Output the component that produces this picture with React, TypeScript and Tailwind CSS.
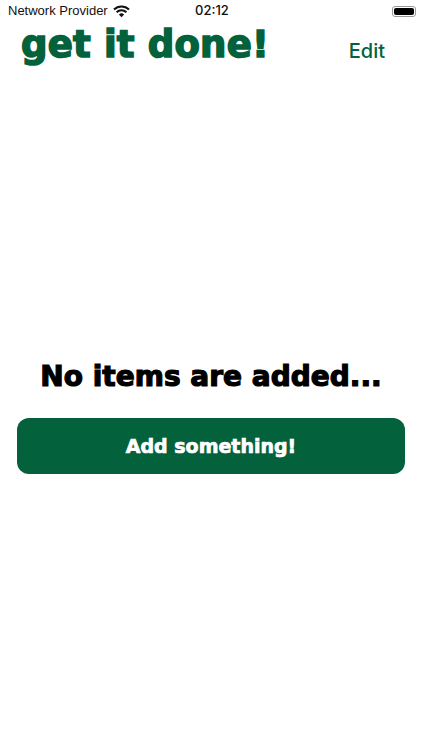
function WifiGlyph() {
  return (
    <svg width="17" height="13" viewBox="0 0 17 13" fill="none" stroke="#111" strokeWidth="2.1">
      <path d="M1 4.6a10.6 10.6 0 0 1 15 0" />
      <path d="M3.6 7.3a7 7 0 0 1 9.8 0" />
      <path d="M8.5 12.2 5.9 9.6a3.7 3.7 0 0 1 5.2 0Z" fill="#111" stroke="none" />
    </svg>
  );
}

function StatusBar() {
  return (
    <div className="grid h-[22px] grid-cols-3 items-center pl-2 pr-[6px] text-[#111]">
      <div className="flex items-center gap-[5px] whitespace-nowrap font-['Liberation_Sans',sans-serif] text-[13px]">
        Network Provider
        <WifiGlyph />
      </div>
      <div className="text-center font-['Inter',sans-serif] text-[13px] font-medium">02:12</div>
      <div className="flex justify-end">
        <div className="flex h-[11px] w-[24px] items-center rounded-[3px] border border-[#999] p-px">
          <div className="h-full w-full rounded-[2px] bg-black" />
        </div>
      </div>
    </div>
  );
}

export default function App() {
  return (
    <div className="flex h-[750px] w-[422px] flex-col overflow-hidden bg-white">
      <StatusBar />
      <div className="flex items-center justify-between pl-[21px] pr-[37px]">
        <h1 className="font-['DejaVu_Sans',sans-serif] text-[37px] leading-[46px] font-bold tracking-[0.2px] whitespace-nowrap text-[#03623c] [-webkit-text-stroke:1.6px_#03623c]">
          get it done!
        </h1>
        <button className="mt-[12px] font-['Inter',sans-serif] text-[20px] font-medium text-[#03623c]">Edit</button>
      </div>

      <div className="mt-[291px] flex flex-col items-center px-[17px]">
        <p className="font-['DejaVu_Sans',sans-serif] text-[28px] leading-[36px] font-bold whitespace-nowrap text-black [-webkit-text-stroke:1.2px_#000]">
          No items are added...
        </p>
        <button className="mt-[23px] flex h-[56px] w-full items-center justify-center rounded-[12px] bg-[#03623c] font-['DejaVu_Sans',sans-serif] text-[19px] font-bold text-white [-webkit-text-stroke:0.7px_#fff]">
          Add something!
        </button>
      </div>
    </div>
  );
}
